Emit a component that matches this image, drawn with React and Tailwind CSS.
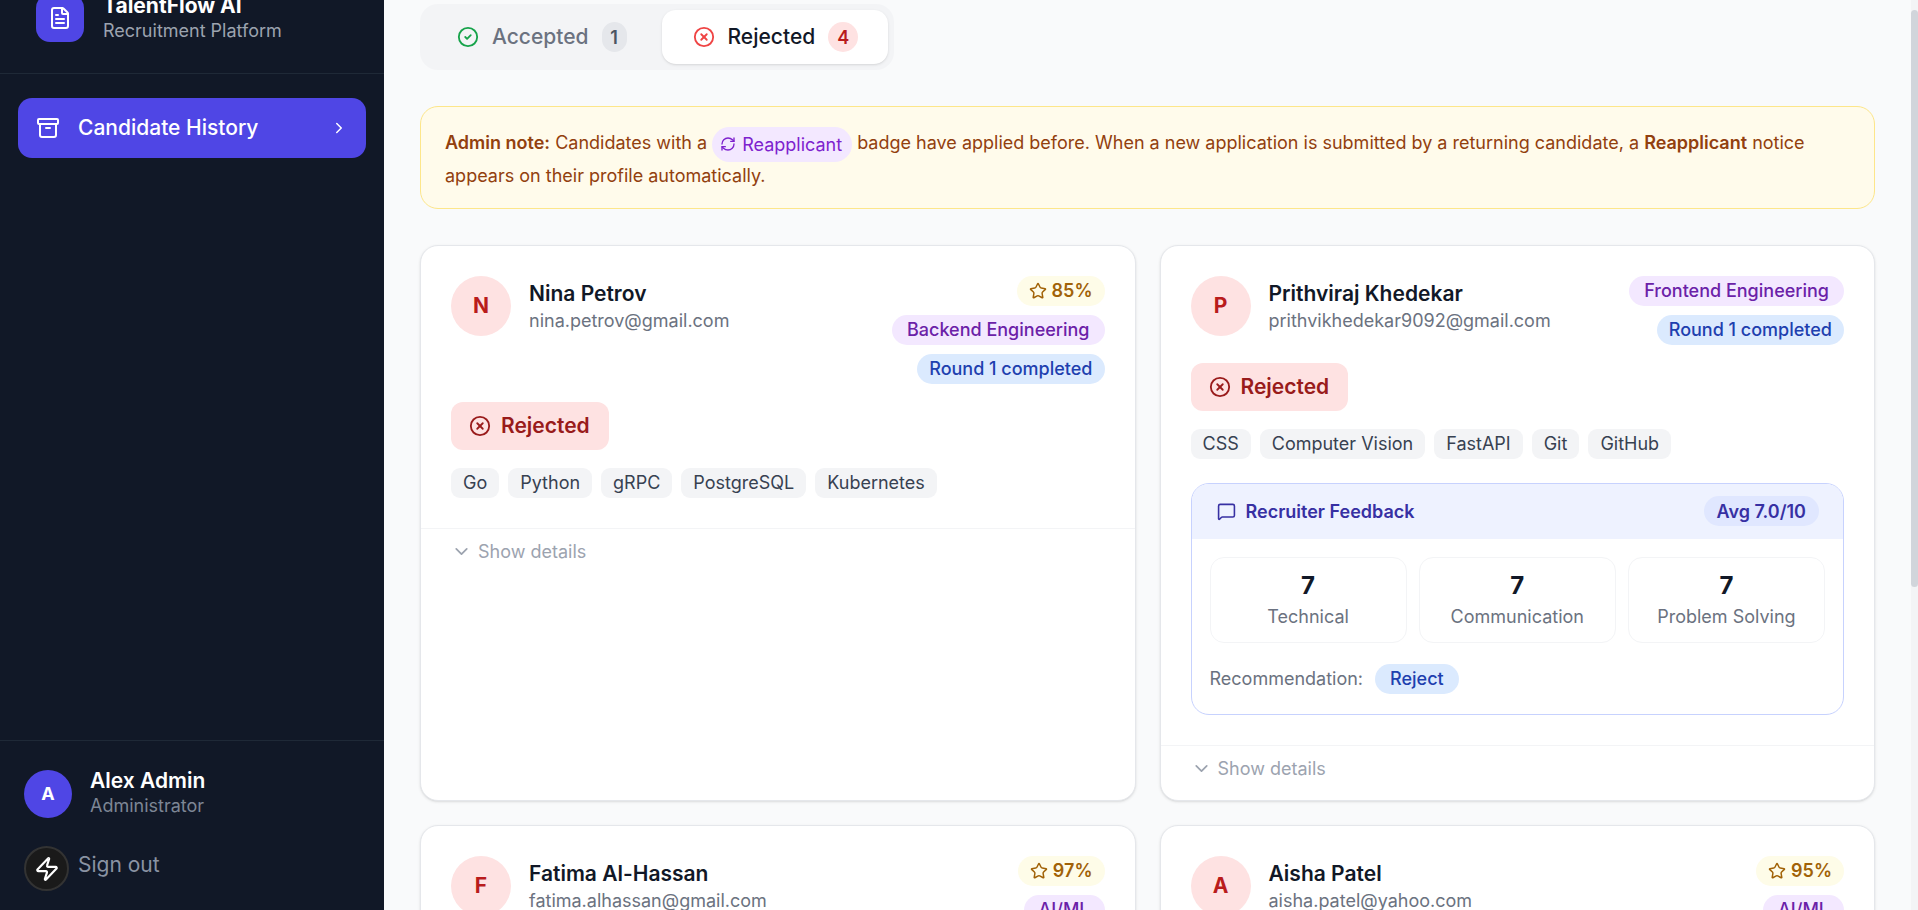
import React, { useLayoutEffect, useRef } from 'react';
import {
    Archive,
    ChevronDown,
    ChevronRight,
    CircleCheck,
    CircleX,
    FileText,
    MessageSquare,
    RefreshCw,
    Star,
    Zap,
} from 'lucide-react';

const feedback = {
    avg: '7.0',
    scores: [
        { label: 'Technical', value: 7 },
        { label: 'Communication', value: 7 },
        { label: 'Problem Solving', value: 7 },
    ],
    recommendation: 'Reject',
};

const candidates = [
    {
        name: 'Nina Petrov',
        email: 'nina.petrov@gmail.com',
        score: 85,
        dept: 'Backend Engineering',
        round: 'Round 1 completed',
        skills: ['Go', 'Python', 'gRPC', 'PostgreSQL', 'Kubernetes'],
    },
    {
        name: 'Prithviraj Khedekar',
        email: 'prithvikhedekar9092@gmail.com',
        dept: 'Frontend Engineering',
        round: 'Round 1 completed',
        skills: ['CSS', 'Computer Vision', 'FastAPI', 'Git', 'GitHub'],
        feedback,
    },
    {
        name: 'Fatima Al-Hassan',
        email: 'fatima.alhassan@gmail.com',
        score: 97,
        dept: 'AI/ML',
        round: 'Round 1 completed',
        skills: ['Python', 'PyTorch', 'NLP', 'MLOps', 'Docker'],
    },
    {
        name: 'Aisha Patel',
        email: 'aisha.patel@yahoo.com',
        score: 95,
        dept: 'AI/ML',
        skills: ['Python', 'TensorFlow', 'Pandas', 'SQL', 'AWS'],
        feedback,
    },
];

const Pill = ({ className, children }) => (
    <span className={`inline-flex h-[30px] items-center rounded-full text-[18px] font-medium ${className}`}>
        {children}
    </span>
);

const FeedbackBox = ({ data }) => (
    <div className="mt-[24px] overflow-hidden rounded-[18px] border border-[#c7d2fe]">
        <div className="flex h-[55px] items-center justify-between bg-[#eef2ff] pr-[24px] pl-[25px]">
            <div className="flex items-center gap-[10px] text-[18px] font-semibold text-[#3730a3]">
                <MessageSquare className="h-[19px] w-[19px]" strokeWidth={2} />
                Recruiter Feedback
            </div>
            <span className="inline-flex h-[30px] items-center rounded-full bg-[#e0e7ff] px-[13px] text-[18px] font-semibold text-[#3730a3]">
                Avg {data.avg}/10
            </span>
        </div>
        <div className="px-[18px] pt-[18px] pb-[20px]">
            <div className="grid grid-cols-3 gap-[12px]">
                {data.scores.map(score => (
                    <div key={score.label} className="flex h-[86px] flex-col items-center justify-center rounded-[14px] border border-[#f3f4f6] pt-[2px]">
                        <span className="text-[24px] leading-[30px] font-bold text-[#111827]">{score.value}</span>
                        <span className="mt-[3px] text-[18px] leading-[26px] text-[#6b7280]">{score.label}</span>
                    </div>
                ))}
            </div>
            <div className="mt-[21px] flex items-center gap-[12px] text-[18px] text-[#6b7280]">
                Recommendation:
                <span className="inline-flex h-[30px] items-center rounded-full bg-[#dbeafe] px-[15px] font-medium text-[#1e40af]">
                    {data.recommendation}
                </span>
            </div>
        </div>
    </div>
);

const CandidateCard = ({ candidate }) => (
    <div className="flex flex-col rounded-[18px] border border-[#e5e7eb] bg-white shadow-sm">
        <div className="px-[30px] pt-[30px] pb-[30px]">
            <div className="flex items-start justify-between">
                <div className="flex items-center gap-[18px]">
                    <div className="flex h-[60px] w-[60px] items-center justify-center rounded-full bg-[#fee2e2] text-[21px] font-bold text-[#b91c1c]">
                        {candidate.name.charAt(0)}
                    </div>
                    <div className="pt-[3px]">
                        <div className="text-[21px] leading-[28px] font-semibold text-[#111827]">{candidate.name}</div>
                        <div className="text-[18px] leading-[26px] text-[#6b7280]">{candidate.email}</div>
                    </div>
                </div>
                <div className="flex flex-col items-end gap-[9px]">
                    {candidate.score && (
                        <Pill className="gap-[5px] rounded-[12px] bg-[#fefce8] px-[12px] font-semibold text-[#a16207]">
                            <Star className="h-[18px] w-[18px]" strokeWidth={2} />
                            {candidate.score}%
                        </Pill>
                    )}
                    <Pill className="bg-[#f3e8ff] px-[15px] text-[#6b21a8]">{candidate.dept}</Pill>
                    {candidate.round && <Pill className="bg-[#dbeafe] px-[12px] text-[#1e40af]">{candidate.round}</Pill>}
                </div>
            </div>
            <div className="mt-[18px] inline-flex h-[48px] items-center gap-[10px] rounded-[12px] bg-[#fee2e2] pr-[19px] pl-[18px] text-[21px] font-semibold text-[#991b1b]">
                <CircleX className="h-[22px] w-[22px]" strokeWidth={2} />
                Rejected
            </div>
            <div className="mt-[18px] flex flex-wrap gap-[9px]">
                {candidate.skills.map(skill => (
                    <span key={skill} className="inline-flex h-[30px] items-center rounded-[9px] bg-[#f3f4f6] px-[12px] text-[18px] text-[#374151]">
                        {skill}
                    </span>
                ))}
            </div>
            {candidate.feedback && <FeedbackBox data={candidate.feedback} />}
        </div>
        <div className="mb-[8px] flex h-[47px] items-center gap-[6px] border-t border-[#f3f4f6] px-[30px] text-[18px] text-[#9ca3af]">
            <ChevronDown className="h-[21px] w-[21px]" strokeWidth={2} />
            Show details
        </div>
    </div>
);

const Sidebar = () => (
    <aside className="relative flex h-screen w-[384px] shrink-0 flex-col overflow-hidden bg-[#111827]">
        <div className="-mt-[8px] flex items-center gap-[19px] border-b border-[#1f2937] pb-[30px] pl-[36px]">
            <div className="flex h-[48px] w-[48px] items-center justify-center rounded-[14px] bg-[#4f46e5] text-white">
                <FileText className="h-[24px] w-[24px]" strokeWidth={2} />
            </div>
            <div className="pt-[1px]">
                <div className="text-[21px] leading-[26px] font-bold text-white">TalentFlow AI</div>
                <div className="text-[18px] leading-[24px] text-[#9ca3af]">Recruitment Platform</div>
            </div>
        </div>
        <nav className="flex-1 px-[18px] pt-[24px]">
            <div className="flex h-[60px] items-center rounded-[14px] bg-[#4f46e5] pr-[18px] pl-[18px] text-[21px] font-medium text-white">
                <Archive className="h-[24px] w-[24px]" strokeWidth={2} />
                <span className="ml-[18px] flex-1">Candidate History</span>
                <ChevronRight className="h-[18px] w-[18px]" strokeWidth={2} />
            </div>
        </nav>
        <div className="h-[170px] border-t border-[#1f2937] px-[24px] pt-[27px]">
            <div className="flex items-center gap-[18px]">
                <div className="flex h-[48px] w-[48px] items-center justify-center rounded-full bg-[#4f46e5] text-[18px] font-bold text-white">A</div>
                <div>
                    <div className="text-[21px] leading-[25px] font-semibold text-white">Alex Admin</div>
                    <div className="text-[18px] leading-[26px] text-[#7d8695]">Administrator</div>
                </div>
            </div>
            <div className="mt-[33px] pl-[54px] text-[21px] leading-[26px] text-[#8a93a3]">Sign out</div>
        </div>
        <div className="absolute bottom-[19px] left-[24px] flex h-[45px] w-[45px] items-center justify-center rounded-full border-2 border-[#333] bg-[#1a1a1a] text-white">
            <Zap className="h-[26px] w-[26px]" strokeWidth={2} />
        </div>
    </aside>
);

const App = () => {
    const mainRef = useRef(null);

    // the reference is slightly scrolled down
    useLayoutEffect(() => {
        if (mainRef.current) mainRef.current.scrollTop = 16;
    }, []);

    return (
        <div className="flex h-screen overflow-hidden bg-[#f9fafb] font-[Inter,sans-serif]">
            <Sidebar />
            <main ref={mainRef} className="h-screen min-w-0 flex-1 overflow-y-hidden px-[36px] pt-[20px] pb-[36px]">
                <div className="inline-flex gap-[6px] rounded-[18px] bg-[#f3f4f6] p-[6px]">
                    <div className="flex h-[54px] items-center gap-[13px] rounded-[14px] pr-[29px] pl-[31px] text-[21px] font-medium text-[#6b7280]">
                        <CircleCheck className="h-[22px] w-[22px] text-[#16a34a]" strokeWidth={2} />
                        Accepted
                        <span className="flex h-[30px] min-w-[25px] items-center justify-center rounded-full bg-[#e5e7eb] px-[7px] text-[18px] font-semibold text-[#4b5563]">1</span>
                    </div>
                    <div className="flex h-[54px] items-center gap-[13px] rounded-[14px] bg-white pr-[30px] pl-[31px] text-[21px] font-medium text-[#111827] shadow-sm">
                        <CircleX className="h-[22px] w-[22px] text-[#ef4444]" strokeWidth={2} />
                        Rejected
                        <span className="flex h-[30px] min-w-[30px] items-center justify-center rounded-full bg-[#fee2e2] px-[7px] text-[18px] font-semibold text-[#b91c1c]">4</span>
                    </div>
                </div>
                <div className="mt-[36px] rounded-[18px] border border-[#fde68a] bg-[#fffbeb] px-[24px] pt-[20px] pb-[17px] text-[18px] leading-[31px] text-[#92400e]">
                    <strong className="font-semibold">Admin note:</strong> Candidates with a{' '}
                    <span className="-my-[2px] inline-flex h-[35px] items-center gap-[6px] rounded-full bg-[#f3e8ff] pr-[10px] pl-[8px] align-middle text-[#7e22ce]">
                        <RefreshCw className="h-[16px] w-[16px]" strokeWidth={2} />
                        Reapplicant
                    </span>{' '}
                    badge have applied before. When a new application is submitted by a returning candidate, a{' '}
                    <strong className="font-semibold">Reapplicant</strong> notice appears on their profile automatically.
                </div>
                <div className="mt-[36px] grid grid-cols-2 gap-[24px]">
                    {candidates.map(candidate => (
                        <CandidateCard key={candidate.email} candidate={candidate} />
                    ))}
                </div>
            </main>
            {/* scrollbars are hidden in the capture, so the rail is drawn */}
            <div className="h-screen w-[7px] shrink-0 bg-[#f3f4f6] pt-[10px]">
                <div className="h-[577px] rounded-[7px] bg-[#d1d5db]" />
            </div>
        </div>
    );
};

export default App;
